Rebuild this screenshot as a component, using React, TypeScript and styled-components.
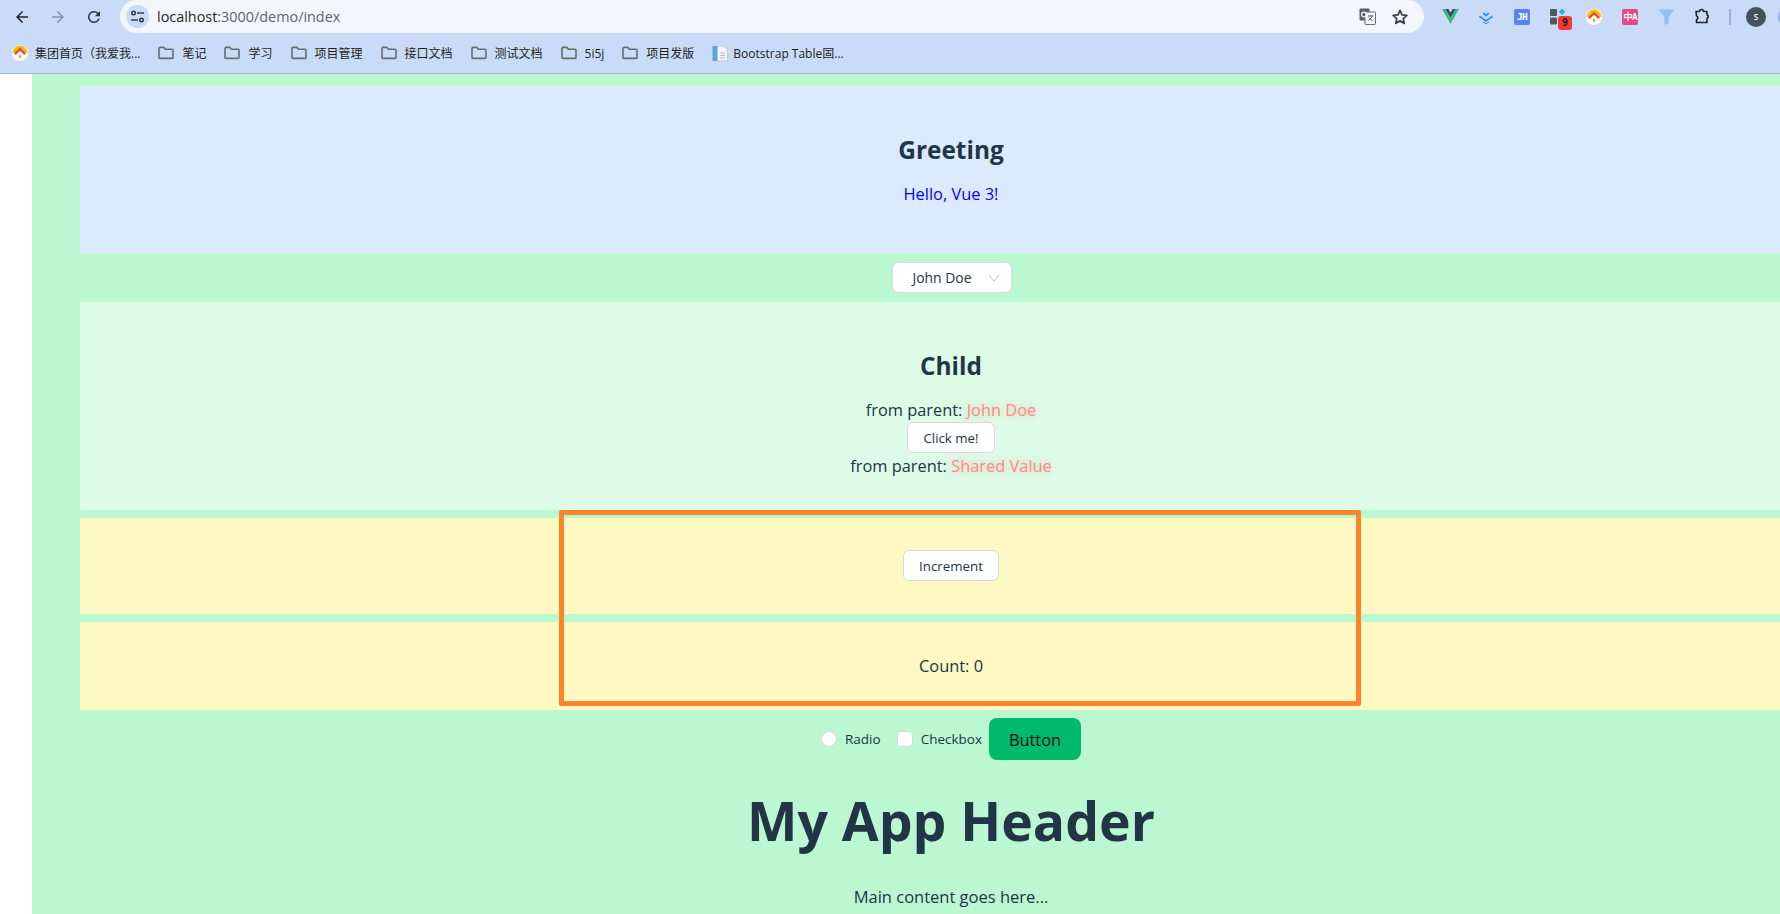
import React from 'react';
import styled, { createGlobalStyle } from 'styled-components';

const GlobalStyle = createGlobalStyle`
    html, body {
        margin: 0;
        padding: 0;
        background: #fff;
        overflow: hidden;
    }
    * {
        box-sizing: border-box;
    }
    body {
        font-family: "Open Sans", "Noto Sans CJK SC", sans-serif;
        color: #213547;
    }
`;

const Window = styled.div`
    width: 1780px;
    height: 914px;
    overflow: hidden;
    display: flex;
    flex-direction: column;
`;

const BrowserBar = styled.header`
    background: #c9dbf6;
    height: 74px;
    flex: none;
    border-bottom: 1px solid #a3b3ca;
    display: flex;
    flex-direction: column;
`;

const Toolbar = styled.div`
    height: 33px;
    padding-left: 4px;
    display: flex;
    align-items: center;
`;

const Slot = styled.div`
    width: 36px;
    height: 33px;
    flex: none;
    position: relative;
    display: flex;
    align-items: center;
    justify-content: center;
`;

const AddressBar = styled.div`
    width: 1304px;
    height: 33px;
    margin: 0 8px;
    padding: 0 15px 0 6px;
    flex: none;
    background: #f3f6fc;
    border-radius: 17px;
    display: flex;
    align-items: center;
`;

const SiteChip = styled.div`
    width: 23px;
    height: 23px;
    border-radius: 50%;
    background: #c9dbf6;
    display: flex;
    align-items: center;
    justify-content: center;
    margin-right: 8px;
`;

const Url = styled.div`
    font-family: "Open Sans", sans-serif;
    font-size: 14.4px;
    color: #5f6368;
    flex: 1;
`;

const UrlHost = styled.span`
    color: #1f1f1f;
`;

const AddressActions = styled.div`
    display: flex;
    align-items: center;
    gap: 15px;
`;

const SquareIcon = styled.div<{ $bg: string }>`
    width: 16px;
    height: 16px;
    border-radius: 2px;
    background: ${(p) => p.$bg};
    color: #fff;
    font-family: "DejaVu Sans Mono", "Noto Sans CJK SC", monospace;
    font-size: 9.5px;
    font-weight: 700;
    letter-spacing: -0.8px;
    line-height: 16px;
    text-align: center;
    white-space: nowrap;
    overflow: hidden;
`;

const Badge = styled.div`
    position: absolute;
    left: 18px;
    top: 16px;
    width: 14px;
    height: 14px;
    border-radius: 3px;
    background: #f23c33;
    color: #1b1b1b;
    font-family: "DejaVu Sans Mono", monospace;
    font-size: 10px;
    font-weight: 700;
    line-height: 14px;
    text-align: center;
`;

const Separator = styled.div`
    width: 2px;
    height: 16px;
    margin: 0 15px 0 9px;
    background: #8fb3e8;
    flex: none;
`;

const Avatar = styled.div`
    width: 20px;
    height: 20px;
    flex: none;
    border-radius: 50%;
    background: #44525c;
    color: #fff;
    font-size: 8px;
    font-weight: 600;
    line-height: 20px;
    text-align: center;
`;

const NextAvatar = styled.div`
    width: 20px;
    height: 20px;
    margin-left: 12px;
    flex: none;
    border-radius: 50%;
    background: #8fb3e8;
`;

const BookmarkRow = styled.nav`
    height: 40px;
    padding: 0 0 0 12px;
    display: flex;
    align-items: center;
    gap: 18px;
`;

const Bookmark = styled.div<{ $gap: number }>`
    display: flex;
    align-items: center;
    gap: ${(p) => p.$gap}px;
    font-family: "Open Sans", "Noto Sans CJK SC", sans-serif;
    font-size: 12px;
    color: #1f1f1f;
    white-space: nowrap;
`;

const Main = styled.main`
    position: relative;
    width: 1838px;
    margin-left: 32px;
    padding: 12px 48px 0;
    flex: none;
    background: #bbf7d0;
    height: 840px;
    text-align: center;
`;

const Panel = styled.section<{ $bg: string; $pad: string }>`
    background: ${(p) => p.$bg};
    padding: ${(p) => p.$pad};
    font-size: 16.4px;
    line-height: 24px;
`;

const PanelGap = styled.div`
    height: 8px;
`;

const PanelTitle = styled.h2`
    margin: 0 0 14px;
    font-size: 24.4px;
    line-height: 36px;
    font-weight: 700;
`;

const BlueText = styled.p`
    margin: 0;
    color: #0000ff;
`;

const SelectRow = styled.div`
    height: 49px;
    padding: 9px 0 0 1px;
    display: flex;
    justify-content: center;
`;

const SelectBox = styled.div`
    width: 120px;
    height: 31px;
    background: #fff;
    border: 1px solid #d9d9d9;
    border-radius: 6px;
    padding: 0 11px 0 20px;
    display: flex;
    align-items: center;
    justify-content: space-between;
    font-size: 13.9px;
    color: #213547;
`;

const FromLine = styled.div`
    white-space: nowrap;
`;

const Shared = styled.span`
    color: #ff8a8a;
    text-shadow: 0 0 8px rgba(255, 138, 138, 0.6);
`;

const PlainButton = styled.button<{ $after: number }>`
    display: block;
    margin: 0 auto ${(p) => p.$after}px;
    height: 31px;
    padding: 0 15px;
    background: #fff;
    border: 1px solid #d9d9d9;
    border-radius: 6px;
    font-family: inherit;
    font-size: 13.3px;
    color: #213547;
`;

const ControlRow = styled.div`
    height: 69px;
    padding-top: 8px;
    display: flex;
    justify-content: center;
    align-items: flex-start;
`;

const OptionLabel = styled.label<{ $gap: number }>`
    height: 42px;
    margin-right: ${(p) => p.$gap}px;
    display: flex;
    align-items: center;
    gap: 8px;
    font-size: 13.5px;
`;

const RadioDot = styled.span`
    width: 16px;
    height: 16px;
    background: #fff;
    border: 1px solid #d9d9d9;
    border-radius: 50%;
`;

const CheckBox = styled.span`
    width: 16px;
    height: 16px;
    background: #fff;
    border: 1px solid #d9d9d9;
    border-radius: 4px;
`;

const PrimaryButton = styled.button`
    width: 92px;
    height: 42px;
    background: #00b96b;
    border: 0;
    border-radius: 8px;
    font-family: inherit;
    font-size: 16.4px;
    color: #111;
`;

const AppHeader = styled.h1`
    margin: 0;
    font-size: 53.5px;
    line-height: 84px;
    font-weight: 700;
    color: #213547;
`;

const MainText = styled.p`
    margin: 0;
    padding-top: 22px;
    font-size: 16.5px;
    line-height: 24px;
`;

const Highlight = styled.div`
    position: absolute;
    left: 527px;
    top: 436px;
    width: 802px;
    height: 196px;
    border: 5px solid #ff8329;
    border-radius: 2px;
`;

const Back = ({ color }: { color: string }) => (
    <svg width="18" height="18" viewBox="0 0 24 24" fill={color}>
        <path d="M20 11H7.83l5.59-5.59L12 4l-8 8 8 8 1.41-1.41L7.83 13H20v-2z" />
    </svg>
);

const Forward = ({ color }: { color: string }) => (
    <svg width="18" height="18" viewBox="0 0 24 24" fill={color}>
        <path d="M4 11h12.17l-5.59-5.59L12 4l8 8-8 8-1.41-1.41L16.17 13H4v-2z" />
    </svg>
);

const Reload = () => (
    <svg width="18" height="18" viewBox="0 0 24 24" fill="#333a40">
        <path d="M17.65 6.35A7.958 7.958 0 0 0 12 4c-4.42 0-7.99 3.58-7.99 8s3.57 8 7.99 8c3.73 0 6.84-2.55 7.73-6h-2.08A5.99 5.99 0 0 1 12 18c-3.31 0-6-2.69-6-6s2.69-6 6-6c1.66 0 3.14.69 4.22 1.78L13 11h7V4l-2.35 2.35z" />
    </svg>
);

const Tune = () => (
    <svg width="15" height="13" viewBox="0 0 15 13" fill="none" stroke="#30343a" strokeWidth="1.4">
        <circle cx="3.5" cy="3" r="1.8" />
        <path d="M7 3h7" />
        <circle cx="11.5" cy="10" r="1.8" />
        <path d="M1 10h7" />
    </svg>
);

const Translate = () => (
    <svg width="17" height="17" viewBox="0 0 17 17">
        <rect x="0.5" y="0.5" width="10" height="12" rx="1" fill="#5c5f63" />
        <rect x="6" y="4" width="10.5" height="12.5" rx="1" fill="#f3f6fc" stroke="#6a6d71" />
        <circle cx="5" cy="6.5" r="2.4" fill="none" stroke="#f3f6fc" strokeWidth="1.2" />
        <path d="M9 8h5.5M11.8 7v1M13.5 8.5l-4 4M10 9.5l3.5 3.5" fill="none" stroke="#55585c" />
    </svg>
);

const Star = () => (
    <svg width="18" height="18" viewBox="0 0 24 24" fill="none" stroke="#3f4449" strokeWidth="2.4" strokeLinejoin="round">
        <path d="M12 3.2l2.7 5.9 6.4.7-4.8 4.3 1.4 6.4L12 17.2l-5.7 3.3 1.4-6.4-4.8-4.3 6.4-.7L12 3.2z" />
    </svg>
);

const VueLogo = () => (
    <svg width="17" height="15" viewBox="0 0 17 15">
        <path d="M0 0h3.4l5.1 8.6L13.6 0H17L8.5 15 0 0z" fill="#42b883" />
        <path d="M3.4 0h3l2.1 3.7L10.6 0h3L8.5 8.6 3.4 0z" fill="#35495e" />
    </svg>
);

const LayersLogo = () => (
    <svg width="16" height="14" viewBox="0 0 16 14" fill="none" stroke="#2f8cf5" strokeWidth="1.7">
        <path d="M5.2 3l2.8 2.5L10.8 3" />
        <path d="M1.5 6.2L8 11l6.5-4.8" />
        <path d="M5 12l3 1.6 3-1.6" strokeWidth="1" />
    </svg>
);

const GridLogo = () => (
    <svg width="18" height="18" viewBox="0 0 18 18">
        <rect x="1" y="1" width="7" height="7" rx="1" fill="#55595e" />
        <rect x="1" y="9.5" width="7" height="7" rx="1" fill="#55595e" />
        <path d="M13 0.5l3.4 3.2-3.4 3.2-3.4-3.2z" fill="#1fb6f0" />
    </svg>
);

const HomeLogo = ({ size }: { size: number }) => (
    <svg width={size} height={size} viewBox="0 0 16 16">
        <circle cx="8" cy="8" r="8" fill="#fff" />
        <path d="M0.5 8a7.5 7.5 0 0 1 15 0" fill="#fbbc1a" />
        <path d="M8 2.6L2.4 8v1.5h11.2V8z" fill="#ef4a23" />
        <path d="M4.8 8.8L8 5.8l3.2 3V13H4.8z" fill="#fff" />
        <rect x="7" y="10" width="2" height="3" fill="#f7a21b" />
    </svg>
);

const Funnel = () => (
    <svg width="17" height="16" viewBox="0 0 17 16">
        <path d="M0.5 0.5h16L10.5 8v6.5L6.5 16V8z" fill="#8fc1f4" />
    </svg>
);

const Puzzle = () => (
    <svg width="17" height="17" viewBox="0 0 17 17" fill="none" stroke="#1f2226" strokeWidth="1.6" strokeLinejoin="round">
        <path d="M2 3.5h3.5a2 2 0 0 1 4 0H13v3.3a1.9 1.9 0 0 1 0 3.6v4.1H2.5v-3a1.8 1.8 0 0 0 0-3.5z" />
    </svg>
);

const Folder = () => (
    <svg width="16" height="14" viewBox="0 0 16 14" fill="none" stroke="#676b70" strokeWidth="1.6" strokeLinejoin="round">
        <path d="M1 2.4a1 1 0 0 1 1-1h3.8l1.6 1.8H14a1 1 0 0 1 1 1v7.2a1 1 0 0 1-1 1H2a1 1 0 0 1-1-1z" />
    </svg>
);

const DocIcon = () => (
    <svg width="16" height="17" viewBox="0 0 16 17">
        <rect x="0.5" y="1" width="5" height="15" fill="#5aa6dc" />
        <path d="M5.5 1H12l3.5 3.5V16H5.5z" fill="#f2f4f6" stroke="#b5bcc4" strokeWidth="0.7" />
        <path d="M8 8h5M8 10.5h5M8 13h5" stroke="#b5bcc4" />
    </svg>
);

const Chevron = () => (
    <svg width="12" height="8" viewBox="0 0 12 8" fill="none" stroke="#bfbfbf" strokeWidth="1">
        <path d="M1 1l5 6 5-6" />
    </svg>
);

const folders = ['笔记', '学习', '项目管理', '接口文档', '测试文档', '5i5j', '项目发版'];

export default function App() {
    return (
        <Window>
            <GlobalStyle />
            <BrowserBar>
                <Toolbar>
                    <Slot>
                        <Back color="#22272c" />
                    </Slot>
                    <Slot>
                        <Forward color="#8593a8" />
                    </Slot>
                    <Slot>
                        <Reload />
                    </Slot>
                    <AddressBar>
                        <SiteChip>
                            <Tune />
                        </SiteChip>
                        <Url>
                            <UrlHost>localhost</UrlHost>:3000/demo/index
                        </Url>
                        <AddressActions>
                            <Translate />
                            <Star />
                        </AddressActions>
                    </AddressBar>
                    <Slot>
                        <VueLogo />
                    </Slot>
                    <Slot>
                        <LayersLogo />
                    </Slot>
                    <Slot>
                        <SquareIcon $bg="#5b83ec">JH</SquareIcon>
                    </Slot>
                    <Slot>
                        <GridLogo />
                        <Badge>9</Badge>
                    </Slot>
                    <Slot>
                        <HomeLogo size={16} />
                    </Slot>
                    <Slot>
                        <SquareIcon $bg="#e8478b">中A</SquareIcon>
                    </Slot>
                    <Slot>
                        <Funnel />
                    </Slot>
                    <Slot>
                        <Puzzle />
                    </Slot>
                    <Separator />
                    <Avatar>S</Avatar>
                    <NextAvatar />
                </Toolbar>
                <BookmarkRow>
                    <Bookmark $gap={7}>
                        <HomeLogo size={16} />
                        集团首页（我爱我...
                    </Bookmark>
                    {folders.map((name) => (
                        <Bookmark key={name} $gap={8}>
                            <Folder />
                            {name}
                        </Bookmark>
                    ))}
                    <Bookmark $gap={5}>
                        <DocIcon />
                        Bootstrap Table固...
                    </Bookmark>
                </BookmarkRow>
            </BrowserBar>
            <Main>
                <Panel $bg="#dbeafe" $pad="46px 0 47px">
                    <PanelTitle>Greeting</PanelTitle>
                    <BlueText>Hello, Vue 3!</BlueText>
                </Panel>
                <SelectRow>
                    <SelectBox>
                        John Doe
                        <Chevron />
                    </SelectBox>
                </SelectRow>
                <Panel $bg="#dcfce7" $pad="46px 0 32px">
                    <PanelTitle>Child</PanelTitle>
                    <FromLine>
                        from parent: <Shared>John Doe</Shared>
                    </FromLine>
                    <PlainButton $after={1}>Click me!</PlainButton>
                    <FromLine>
                        from parent: <Shared>Shared Value</Shared>
                    </FromLine>
                </Panel>
                <PanelGap />
                <Panel $bg="#fef9c3" $pad="32px 0">
                    <PlainButton $after={1}>Increment</PlainButton>
                </Panel>
                <PanelGap />
                <Panel $bg="#fef9c3" $pad="32px 0">
                    Count: 0
                </Panel>
                <ControlRow>
                    <OptionLabel $gap={16}>
                        <RadioDot />
                        Radio
                    </OptionLabel>
                    <OptionLabel $gap={7}>
                        <CheckBox />
                        Checkbox
                    </OptionLabel>
                    <PrimaryButton>Button</PrimaryButton>
                </ControlRow>
                <AppHeader>My App Header</AppHeader>
                <MainText>Main content goes here...</MainText>
                <Highlight />
            </Main>
        </Window>
    );
}
